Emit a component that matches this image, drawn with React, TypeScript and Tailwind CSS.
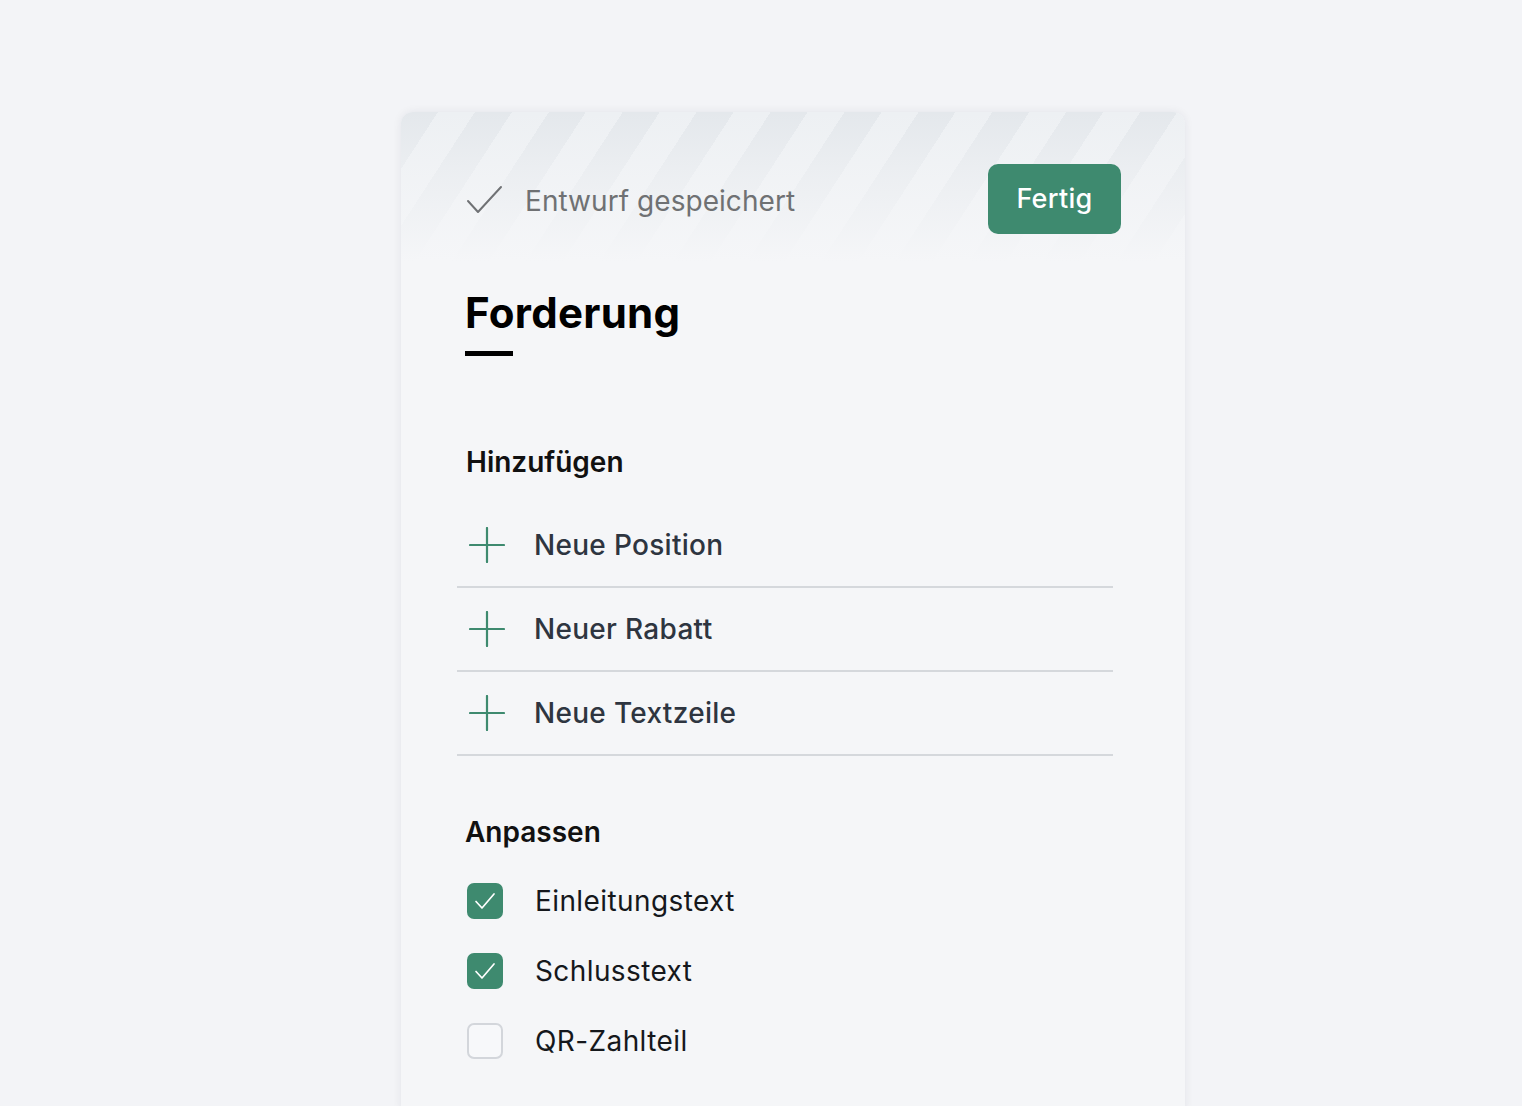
import React from 'react';

const font = { fontFamily: 'Inter, "Noto Sans", sans-serif' };

function Plus() {
  return (
    <svg width="36" height="36" viewBox="0 0 36 36" fill="none" className="shrink-0">
      <path d="M18 1v34M1 18h34" stroke="#3e8a6f" strokeWidth="2.2" strokeLinecap="round" />
    </svg>
  );
}

function Check({ checked, label }: { checked: boolean; label: string }) {
  return (
    <div className="flex items-center h-[70px]">
      <div
        className={
          checked
            ? 'w-[36px] h-[36px] ml-[2px] rounded-[7px] bg-[#3e8a6f] flex items-center justify-center'
            : 'w-[36px] h-[36px] ml-[2px] rounded-[7px] border-2 border-[#d3d6db] bg-[#f7f8fa]'
        }
      >
        {checked && (
          <svg width="36" height="36" viewBox="0 0 36 36" fill="none">
            <path d="M9 18.5l6 6.5L27 11" stroke="#fff" strokeWidth="1.7" strokeLinecap="round" strokeLinejoin="round" />
          </svg>
        )}
      </div>
      <span className="ml-[32px] text-[28px] text-[#15181c] tracking-[0.4px]">{label}</span>
    </div>
  );
}

const addRows = ['Neue Position', 'Neuer Rabatt', 'Neue Textzeile'];

export default function App() {
  return (
    <div className="min-h-screen bg-[#f3f4f7] overflow-hidden" style={font}>
      <div className="pt-[112px] flex pl-[401px]">
        <div className="w-[784px] h-[1000px] rounded-t-[12px] bg-[#f5f6f8] shadow-[0_0_10px_rgba(20,30,50,0.07)] overflow-hidden">
          {/* header with stripes */}
          <div className="h-[150px] bg-[linear-gradient(to_bottom,rgba(245,246,248,0)_0%,rgba(245,246,248,0.45)_40%,#f5f6f8_100%),repeating-linear-gradient(123deg,#e4e8ec_0px,#e4e8ec_31px,#edf0f3_31px,#edf0f3_62px)] px-[64px] pt-[52px]">
            <div className="flex items-center justify-between h-[70px]">
              <div className="flex items-center">
                <svg width="38" height="30" viewBox="0 0 38 30" fill="none" className="ml-[1px] mt-[2px]">
                  <path d="M2 16l10 11L35 2" stroke="#707275" strokeWidth="2" strokeLinecap="round" strokeLinejoin="round" />
                </svg>
                <span className="ml-[21px] mt-[3px] text-[28px] text-[#6f7173] tracking-[0.05px]">Entwurf gespeichert</span>
              </div>
              <button className="h-[70px] w-[133px] rounded-[10px] bg-[#3e8a6f] text-white text-[27px] font-medium tracking-[0.3px]">
                Fertig
              </button>
            </div>
          </div>

          <div className="px-[64px]">
            <h1 className="text-[42px] font-bold text-black leading-none mt-[30px] tracking-[0.3px]">Forderung</h1>
            <div className="w-[48px] h-[5px] bg-black mt-[17px]" />

            <h2 className="text-[28px] font-semibold text-[#111] mt-[85px] ml-[1px]">Hinzufügen</h2>
            <div className="mt-[21px] -ml-[8px] w-[656px]">
              {addRows.map((r) => (
                <div key={r} className="h-[84px] border-b-2 border-[#d5d8dc] flex items-center pl-[12px]">
                  <Plus />
                  <span className="ml-[29px] text-[28px] font-medium text-[#2e3540] tracking-[0.3px]">{r}</span>
                </div>
              ))}
            </div>

            <h2 className="text-[28px] font-semibold text-[#111] mt-[55px]">Anpassen</h2>
            <div className="mt-[13px]">
              <Check checked label="Einleitungstext" />
              <Check checked label="Schlusstext" />
              <Check checked={false} label="QR-Zahlteil" />
            </div>
          </div>
        </div>
      </div>
    </div>
  );
}
